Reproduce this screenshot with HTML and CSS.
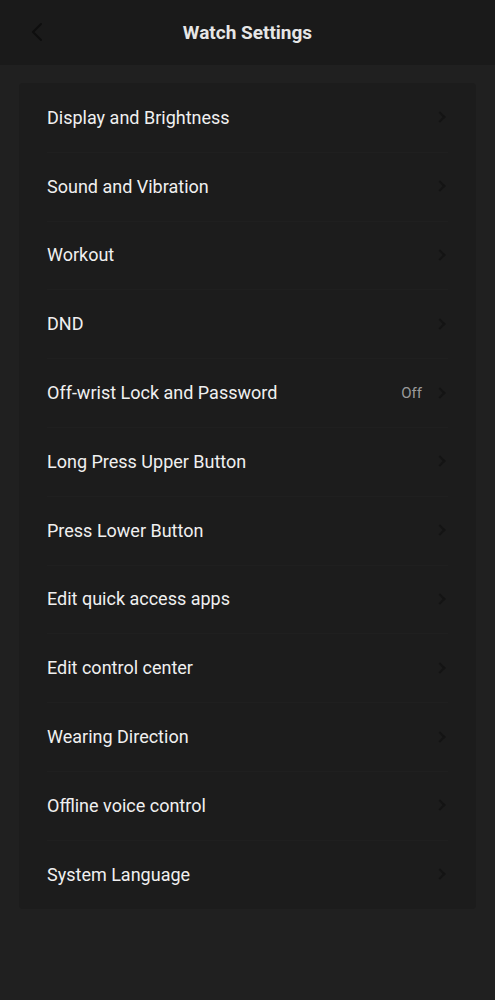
FILE: index.html
```html
<!DOCTYPE html>
<html lang="en">
<head>
  <meta charset="UTF-8" />
  <title>Watch Settings</title>
  <meta name="viewport" content="width=device-width, initial-scale=1.0" />
  <link rel="stylesheet" href="styles.css">
</head>
<body>
  <header class="topbar">
    <svg class="back" viewBox="0 0 12 20" width="12" height="20">
      <path d="M10 2 L2 10 L10 18" fill="none" stroke="currentColor" stroke-width="2" stroke-linecap="round" stroke-linejoin="round"/>
    </svg>
    <h1>Watch Settings</h1>
  </header>

  <main class="card">
    <div class="row"><span class="label">Display and Brightness</span><span class="chev"></span></div>
    <div class="row"><span class="label">Sound and Vibration</span><span class="chev"></span></div>
    <div class="row"><span class="label">Workout</span><span class="chev"></span></div>
    <div class="row"><span class="label">DND</span><span class="chev"></span></div>
    <div class="row"><span class="label">Off-wrist Lock and Password</span><span class="value">Off</span><span class="chev"></span></div>
    <div class="row"><span class="label">Long Press Upper Button</span><span class="chev"></span></div>
    <div class="row"><span class="label">Press Lower Button</span><span class="chev"></span></div>
    <div class="row"><span class="label">Edit quick access apps</span><span class="chev"></span></div>
    <div class="row"><span class="label">Edit control center</span><span class="chev"></span></div>
    <div class="row"><span class="label">Wearing Direction</span><span class="chev"></span></div>
    <div class="row"><span class="label">Offline voice control</span><span class="chev"></span></div>
    <div class="row"><span class="label">System Language</span><span class="chev"></span></div>
  </main>
</body>
</html>
```

FILE: styles.css
```css
* {
  box-sizing: border-box;
}
html, body {
  margin: 0;
  padding: 0;
  height: 100%;
  background: #202020;
  font-family: Roboto, 'Noto Sans', sans-serif;
  color: #eeeeee;
}
.topbar {
  position: relative;
  height: 65px;
  background: #1a1a1a;
  display: flex;
  align-items: center;
  justify-content: center;
}
.back {
  position: absolute;
  left: 31px;
  top: 22px;
  color: #0e0e0e;
}
h1 {
  margin: 0;
  font-size: 19px;
  font-weight: bold;
  color: #e6e6e6;
}
.card {
  margin: 18px 19px 0;
  background: #1c1c1c;
  border-radius: 4px;
}
.row {
  height: 68.8px;
  display: flex;
  align-items: center;
  padding: 0 28px;
  position: relative;
}
.row + .row::before {
  content: "";
  position: absolute;
  top: 0;
  left: 28px;
  right: 28px;
  height: 1px;
  background: #1f1f1f;
}
.label {
  flex: 1;
  font-size: 18px;
  color: #f0f0f0;
}
.value {
  font-size: 15px;
  color: #9a9a9a;
  margin-right: 14px;
}
.chev {
  width: 8px;
  height: 8px;
  border-top: 2px solid #141414;
  border-right: 2px solid #141414;
  transform: rotate(45deg);
  margin-right: 4px;
}
```
